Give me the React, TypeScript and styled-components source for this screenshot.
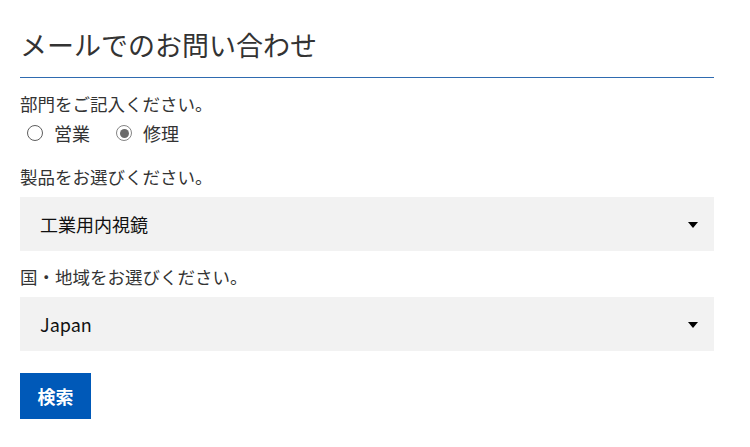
import React, { useState } from "react";
import styled, { createGlobalStyle } from "styled-components";

const Global = createGlobalStyle`
  html, body { margin: 0; padding: 0; background: #fff; }
  body { font-family: "Noto Sans CJK JP", "Noto Sans", sans-serif; color: #333; }
  * { box-sizing: border-box; }
`;

const Page = styled.div`
  width: 750px;
  padding: 20px 36px 0 20px;
`;

const Title = styled.h1`
  margin: 0;
  font-size: 27px;
  font-weight: 400;
  line-height: 50px;
  color: #333;
  padding-bottom: 7px;
  border-bottom: 1px solid #2f6bb0;
`;

const Form = styled.form`
  display: flex;
  flex-direction: column;
`;

const Label = styled.div<{ $top: number }>`
  margin-top: ${(p) => p.$top}px;
  font-size: 17.5px;
  line-height: 26px;
  color: #333;
`;

const RadioRow = styled.div`
  display: flex;
  align-items: center;
  gap: 26px;
  padding-left: 7px;
  height: 32px;
`;

const RadioLabel = styled.label`
  display: flex;
  align-items: center;
  gap: 11px;
  font-size: 18px;
  color: #333;
  cursor: pointer;
`;

const Radio = styled.input.attrs({ type: "radio" })`
  appearance: none;
  margin: 0;
  width: 16px;
  height: 16px;
  flex: none;
  border: 1.5px solid #5e5e5e;
  border-radius: 50%;
  display: grid;
  place-items: center;
  &:checked {
    border-color: #858585;
  }
  &:checked::after {
    content: "";
    width: 9px;
    height: 9px;
    border-radius: 50%;
    background: #6a6a6a;
  }
`;

const SelectWrap = styled.div<{ $top: number }>`
  position: relative;
  margin-top: ${(p) => p.$top}px;
  &::after {
    content: "";
    position: absolute;
    right: 16px;
    top: 50%;
    margin-top: -2px;
    border-left: 5px solid transparent;
    border-right: 5px solid transparent;
    border-top: 6px solid #000;
    pointer-events: none;
  }
`;

const Select = styled.select`
  appearance: none;
  width: 100%;
  height: 54px;
  border: none;
  outline: none;
  background: #f2f2f2;
  padding: 0 40px 0 20px;
  font-family: "Noto Sans CJK JP", "Noto Sans", sans-serif;
  font-size: 18px;
  color: #111;
  border-radius: 0;
`;

const Button = styled.button`
  margin-top: 22px;
  align-self: flex-start;
  width: 71px;
  height: 46px;
  border: none;
  padding: 0;
  background: #0059b8;
  color: #fff;
  font-family: "Noto Sans CJK JP", sans-serif;
  font-weight: 700;
  font-size: 18px;
  cursor: pointer;
`;

export default function App() {
  const [dept, setDept] = useState("repair");
  return (
    <Page>
      <Global />
      <Title>メールでのお問い合わせ</Title>
      <Form onSubmit={(e) => e.preventDefault()}>
        <Label $top={13}>部門をご記入ください。</Label>
        <RadioRow>
          <RadioLabel>
            <Radio name="dept" checked={dept === "sales"} onChange={() => setDept("sales")} />
            営業
          </RadioLabel>
          <RadioLabel>
            <Radio name="dept" checked={dept === "repair"} onChange={() => setDept("repair")} />
            修理
          </RadioLabel>
        </RadioRow>
        <Label $top={15}>製品をお選びください。</Label>
        <SelectWrap $top={7}>
          <Select defaultValue="industrial">
            <option value="industrial">工業用内視鏡</option>
          </Select>
        </SelectWrap>
        <Label $top={13}>国・地域をお選びください。</Label>
        <SelectWrap $top={7}>
          <Select defaultValue="jp">
            <option value="jp">Japan</option>
          </Select>
        </SelectWrap>
        <Button type="submit">検索</Button>
      </Form>
    </Page>
  );
}
